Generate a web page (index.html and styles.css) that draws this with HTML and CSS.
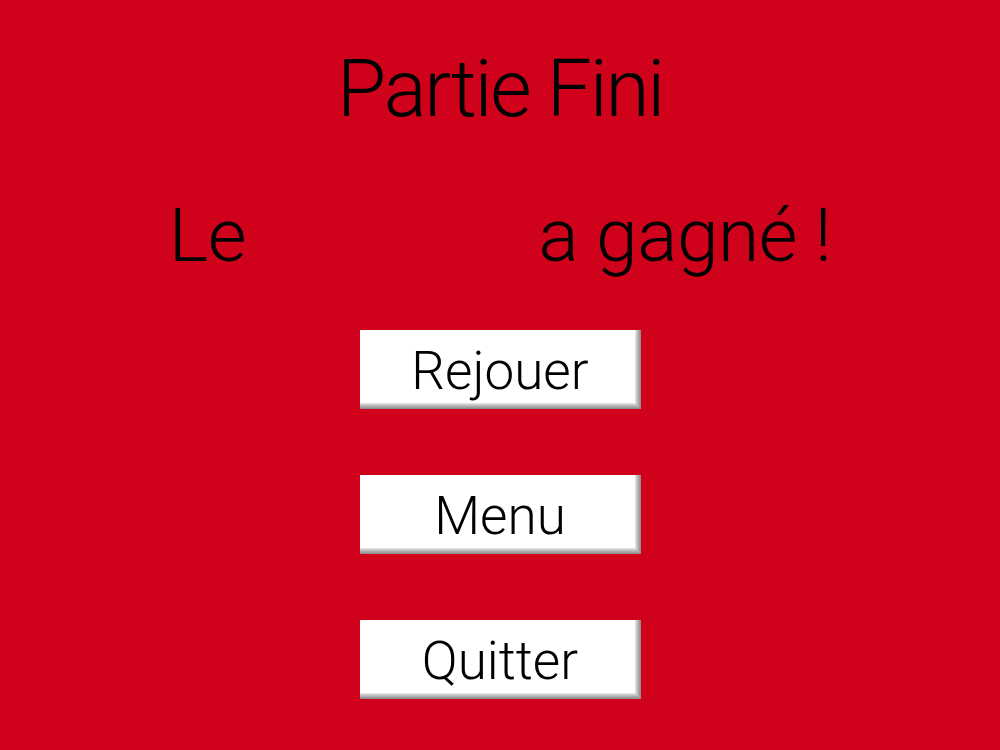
FILE: index.html
```html
<!DOCTYPE html>
<html lang="fr">
<head>
<meta charset="utf-8">
<title>Partie Fini</title>
<link rel="stylesheet" href="styles.css">
</head>
<body>
<main class="screen">
  <h1 class="title">Partie Fini</h1>
  <p class="winner">Le <span class="winner-name">joueur</span> a gagné !</p>
  <nav class="actions">
    <button class="btn" type="button">Rejouer</button>
    <button class="btn" type="button">Menu</button>
    <button class="btn" type="button">Quitter</button>
  </nav>
</main>
</body>
</html>
```

FILE: styles.css
```css
html, body {
  margin: 0;
  padding: 0;
  height: 100%;
}

body {
  background: #d0021b;
  font-family: Roboto, "Liberation Sans", sans-serif;
  font-weight: 300;
  color: #000;
  overflow: hidden;
}

.screen {
  display: flex;
  flex-direction: column;
  align-items: center;
}

.title {
  margin: 49px 0 0;
  font-size: 80px;
  line-height: 80px;
  font-weight: 300;
  letter-spacing: -2.2px;
}

.winner {
  margin: 69px 0 0;
  font-size: 75px;
  line-height: 75px;
  white-space: nowrap;
  letter-spacing: -0.5px;
}

.winner-name {
  display: inline-block;
  width: 257px;
  color: #d0021b;
  text-align: center;
}

.actions {
  display: flex;
  flex-direction: column;
  align-items: center;
  gap: 66px;
  margin-top: 57px;
}

.btn {
  box-sizing: border-box;
  width: 281px;
  height: 79px;
  padding: 3px 0 0;
  border: 0;
  background: #fff;
  font-family: inherit;
  font-weight: 300;
  font-size: 53px;
  line-height: 76px;
  color: #000;
  box-shadow:
    inset -1px -1px 0 #8f8f8f,
    inset -2px -2px 0 #9e9e9e,
    inset -3px -3px 0 #adadad,
    inset -4px -4px 0 #bdbdbd,
    inset -5px -5px 0 #cfcfcf,
    inset -6px -6px 0 #e2e2e2;
}
```
